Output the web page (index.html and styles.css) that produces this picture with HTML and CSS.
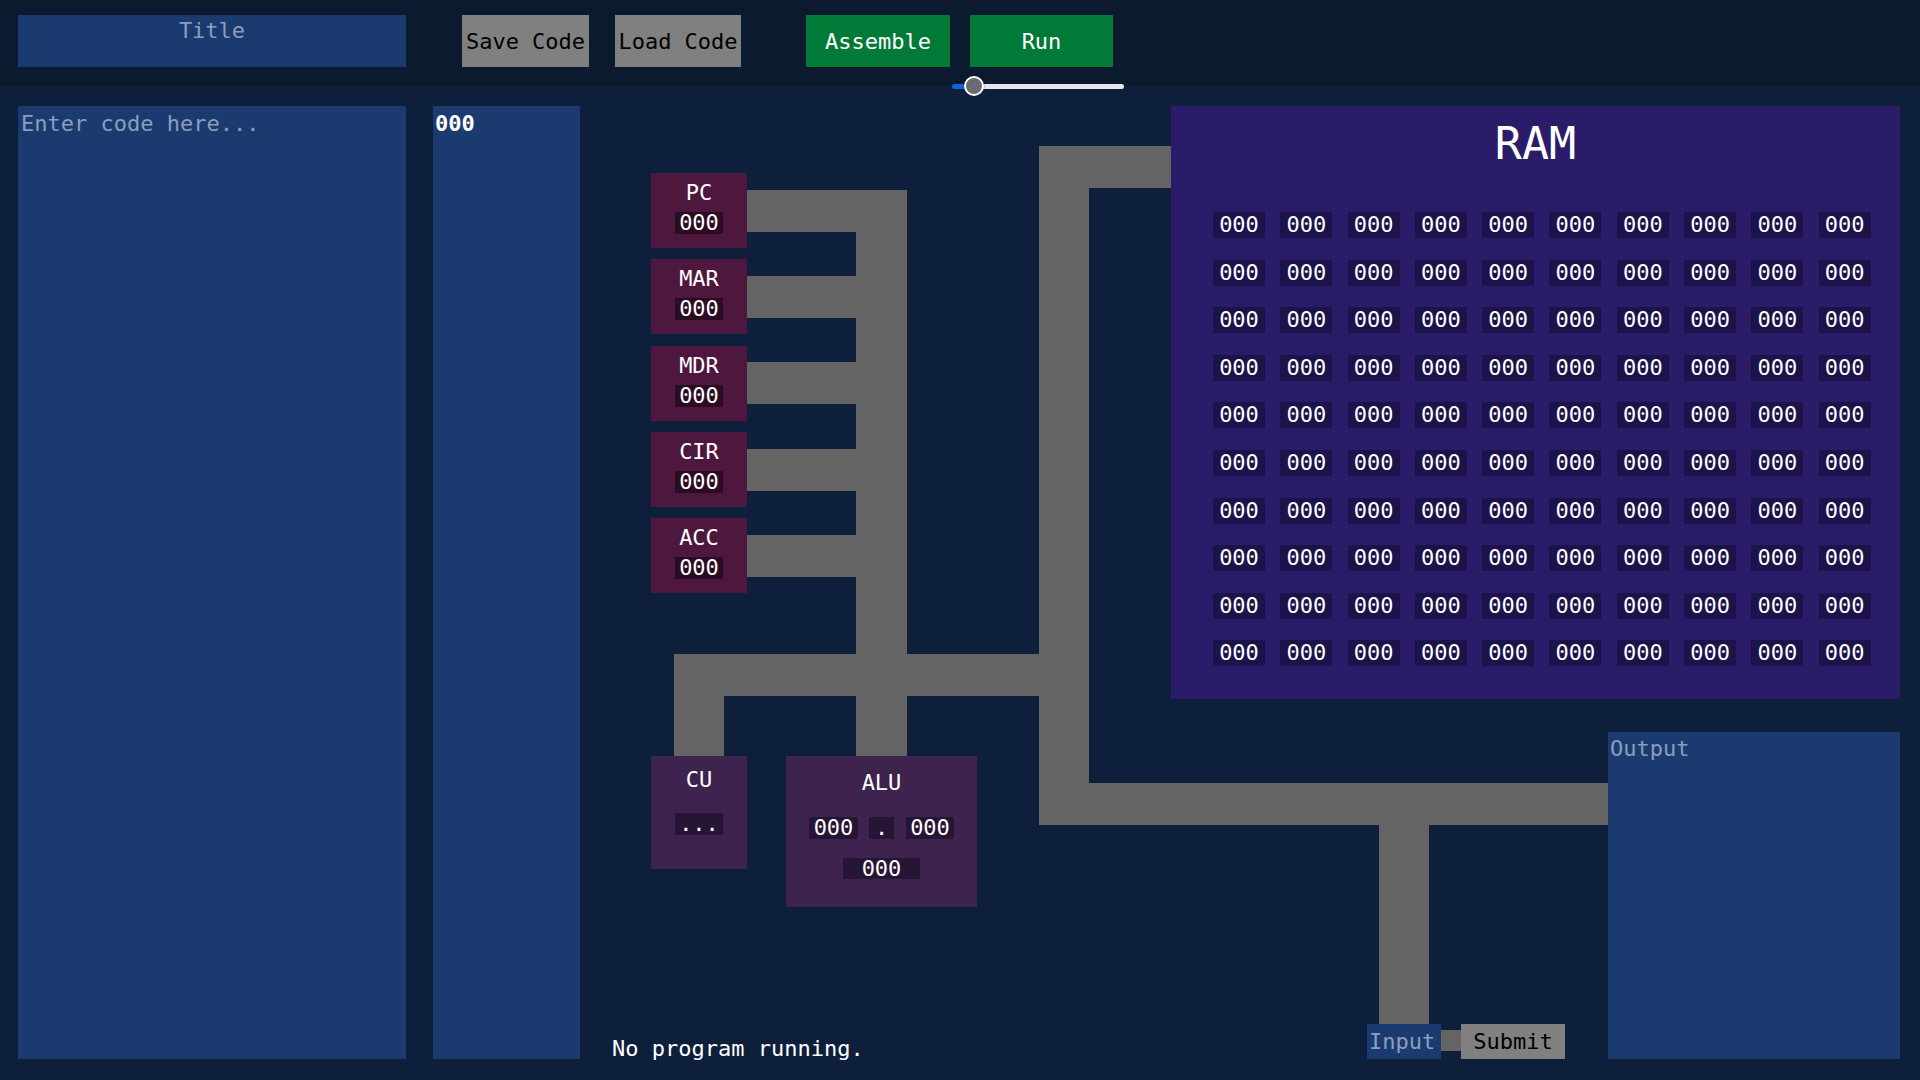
FILE: index.html
```html
<!DOCTYPE html>
<html lang="en">
<head>
<meta charset="utf-8">
<title>CPU Simulator</title>
<link rel="stylesheet" href="styles.css">
</head>
<body>
<header class="topbar">
  <textarea class="title-input" placeholder="Title"></textarea>
  <div class="file-buttons">
    <button class="btn btn-gray btn-save">Save Code</button>
    <button class="btn btn-gray btn-load">Load Code</button>
  </div>
  <div class="run-group">
    <div class="run-buttons">
      <button class="btn btn-green btn-assemble">Assemble</button>
      <button class="btn btn-green btn-run">Run</button>
    </div>
    <input type="range" class="speed" min="0" max="100" value="8">
  </div>
</header>

<main class="workspace">
  <textarea class="code-input" placeholder="Enter code here..."></textarea>
  <div class="memory-list"><div class="mem-line">000</div></div>

  <section class="cpu">
    <svg class="wires" width="1340" height="974" viewBox="0 0 1340 974">
      <rect x="167" y="84" width="160" height="42"/>
      <rect x="276" y="84" width="51" height="506"/>
      <rect x="167" y="170" width="109" height="42"/>
      <rect x="167" y="256" width="109" height="42"/>
      <rect x="167" y="343" width="109" height="42"/>
      <rect x="167" y="429" width="109" height="42"/>
      <rect x="94" y="548" width="415" height="42"/>
      <rect x="94" y="590" width="50" height="60"/>
      <rect x="276" y="590" width="51" height="60"/>
      <rect x="459" y="40" width="50" height="679"/>
      <rect x="459" y="40" width="132" height="42"/>
      <rect x="459" y="677" width="569" height="42"/>
      <rect x="799" y="719" width="50" height="199"/>
      <rect x="861" y="924" width="20" height="21"/>
    </svg>

    <div class="registers">
      <div class="register"><span class="reg-label">PC</span><span class="reg-value">000</span></div>
      <div class="register"><span class="reg-label">MAR</span><span class="reg-value">000</span></div>
      <div class="register"><span class="reg-label">MDR</span><span class="reg-value">000</span></div>
      <div class="register"><span class="reg-label">CIR</span><span class="reg-value">000</span></div>
      <div class="register"><span class="reg-label">ACC</span><span class="reg-value">000</span></div>
    </div>

    <div class="unit cu">
      <span class="unit-label">CU</span>
      <span class="unit-value cu-value">...</span>
    </div>

    <div class="unit alu">
      <span class="unit-label">ALU</span>
      <div class="alu-row">
        <span class="unit-value alu-a">000</span>
        <span class="unit-value alu-op">.</span>
        <span class="unit-value alu-b">000</span>
      </div>
      <span class="unit-value alu-result">000</span>
    </div>

    <div class="ram">
      <h2 class="ram-title">RAM</h2>
      <div class="ram-grid">
        <span class="ram-cell">000</span><span class="ram-cell">000</span><span class="ram-cell">000</span><span class="ram-cell">000</span><span class="ram-cell">000</span><span class="ram-cell">000</span><span class="ram-cell">000</span><span class="ram-cell">000</span><span class="ram-cell">000</span><span class="ram-cell">000</span>
        <span class="ram-cell">000</span><span class="ram-cell">000</span><span class="ram-cell">000</span><span class="ram-cell">000</span><span class="ram-cell">000</span><span class="ram-cell">000</span><span class="ram-cell">000</span><span class="ram-cell">000</span><span class="ram-cell">000</span><span class="ram-cell">000</span>
        <span class="ram-cell">000</span><span class="ram-cell">000</span><span class="ram-cell">000</span><span class="ram-cell">000</span><span class="ram-cell">000</span><span class="ram-cell">000</span><span class="ram-cell">000</span><span class="ram-cell">000</span><span class="ram-cell">000</span><span class="ram-cell">000</span>
        <span class="ram-cell">000</span><span class="ram-cell">000</span><span class="ram-cell">000</span><span class="ram-cell">000</span><span class="ram-cell">000</span><span class="ram-cell">000</span><span class="ram-cell">000</span><span class="ram-cell">000</span><span class="ram-cell">000</span><span class="ram-cell">000</span>
        <span class="ram-cell">000</span><span class="ram-cell">000</span><span class="ram-cell">000</span><span class="ram-cell">000</span><span class="ram-cell">000</span><span class="ram-cell">000</span><span class="ram-cell">000</span><span class="ram-cell">000</span><span class="ram-cell">000</span><span class="ram-cell">000</span>
        <span class="ram-cell">000</span><span class="ram-cell">000</span><span class="ram-cell">000</span><span class="ram-cell">000</span><span class="ram-cell">000</span><span class="ram-cell">000</span><span class="ram-cell">000</span><span class="ram-cell">000</span><span class="ram-cell">000</span><span class="ram-cell">000</span>
        <span class="ram-cell">000</span><span class="ram-cell">000</span><span class="ram-cell">000</span><span class="ram-cell">000</span><span class="ram-cell">000</span><span class="ram-cell">000</span><span class="ram-cell">000</span><span class="ram-cell">000</span><span class="ram-cell">000</span><span class="ram-cell">000</span>
        <span class="ram-cell">000</span><span class="ram-cell">000</span><span class="ram-cell">000</span><span class="ram-cell">000</span><span class="ram-cell">000</span><span class="ram-cell">000</span><span class="ram-cell">000</span><span class="ram-cell">000</span><span class="ram-cell">000</span><span class="ram-cell">000</span>
        <span class="ram-cell">000</span><span class="ram-cell">000</span><span class="ram-cell">000</span><span class="ram-cell">000</span><span class="ram-cell">000</span><span class="ram-cell">000</span><span class="ram-cell">000</span><span class="ram-cell">000</span><span class="ram-cell">000</span><span class="ram-cell">000</span>
        <span class="ram-cell">000</span><span class="ram-cell">000</span><span class="ram-cell">000</span><span class="ram-cell">000</span><span class="ram-cell">000</span><span class="ram-cell">000</span><span class="ram-cell">000</span><span class="ram-cell">000</span><span class="ram-cell">000</span><span class="ram-cell">000</span>
      </div>
    </div>

    <textarea class="output" placeholder="Output" readonly></textarea>
    <input class="input-box" type="text" placeholder="Input">
    <button class="btn btn-gray btn-submit">Submit</button>
    <p class="status">No program running.</p>
  </section>
</main>
</body>
</html>
```
FILE: styles.css
```css
* { box-sizing: border-box; }

html, body {
  margin: 0;
  height: 100%;
}

body {
  background: #0d1f3b;
  color: #ffffff;
  font-family: "DejaVu Sans Mono", "Liberation Mono", monospace;
  font-size: 22px;
  overflow: hidden;
}

textarea, input, button {
  font-family: inherit;
  font-size: 22px;
}

textarea::placeholder, input::placeholder {
  color: #8b9dbb;
  opacity: 1;
}

/* ---------- top bar ---------- */
.topbar {
  height: 86px;
  background: #0c1a30;
  display: flex;
  align-items: flex-start;
  padding: 15px 0 0 18px;
}

.title-input {
  width: 388px;
  height: 52px;
  border: none;
  outline: none;
  resize: none;
  background: #1b3b70;
  color: #ffffff;
  text-align: center;
  padding: 3px 2px;
  line-height: 26px;
}

.file-buttons {
  display: flex;
  gap: 26px;
  margin-left: 56px;
}

.btn {
  border: none;
  border-radius: 0;
  height: 52px;
  padding: 0;
  cursor: pointer;
}

.btn-gray {
  background: #808080;
  color: #000000;
}

.btn-save { width: 127px; }
.btn-load { width: 126px; }

.btn-green {
  background: #007a36;
  color: #ffffff;
}

.run-group {
  display: flex;
  flex-direction: column;
  margin-left: 65px;
}

.run-buttons {
  display: flex;
  gap: 20px;
}

.btn-assemble { width: 144px; }
.btn-run { width: 143px; }

.speed {
  -webkit-appearance: none;
  appearance: none;
  width: 172px;
  height: 20px;
  margin: 9px 0 0 146px;
  background: transparent;
  padding: 0;
}

.speed::-webkit-slider-runnable-track {
  height: 5px;
  border-radius: 3px;
  background: linear-gradient(to right, #1064e0 0, #1064e0 14px, #e6e6ea 14px);
}

.speed::-webkit-slider-thumb {
  -webkit-appearance: none;
  width: 20px;
  height: 20px;
  margin-top: -7.5px;
  border-radius: 50%;
  background: #6b6a77;
  border: 2px solid #ffffff;
  box-shadow: 0 0 2px rgba(0,0,0,0.5);
}

/* ---------- workspace ---------- */
.workspace {
  display: flex;
  align-items: flex-start;
  height: 994px;
  padding: 20px 0 0 18px;
}

.code-input {
  width: 388px;
  height: 953px;
  flex: none;
  border: none;
  outline: none;
  resize: none;
  background: #1b3b70;
  color: #ffffff;
  padding: 4px 3px;
  line-height: 28px;
}

.memory-list {
  width: 147px;
  height: 953px;
  flex: none;
  margin-left: 27px;
  background: #1b3b70;
  padding: 4px 2px;
}

.mem-line {
  font-weight: bold;
  line-height: 28px;
}

/* ---------- CPU diagram (free canvas) ---------- */
.cpu {
  position: relative;
  flex: none;
  width: 1340px;
  height: 974px;
}

.wires {
  position: absolute;
  left: 0;
  top: 0;
  fill: #646464;
}

.registers {
  position: absolute;
  left: 71px;
  top: 67px;
  display: flex;
  flex-direction: column;
  gap: 11.25px;
}

.register {
  width: 96px;
  height: 75px;
  background: #4e173d;
  display: flex;
  flex-direction: column;
  align-items: center;
  padding-top: 7px;
}

.reg-label {
  line-height: 26px;
}

.reg-value {
  margin-top: 6px;
  width: 48px;
  height: 22px;
  line-height: 22px;
  text-align: center;
  background: #2b0c22;
}

.unit {
  position: absolute;
  background: #3d234e;
  display: flex;
  flex-direction: column;
  align-items: center;
}

.unit-label {
  line-height: 26px;
}

.unit-value {
  display: block;
  height: 22px;
  line-height: 22px;
  text-align: center;
  background: #261535;
}

.cu {
  left: 71px;
  top: 650px;
  width: 96px;
  height: 113px;
  padding-top: 11px;
}

.cu-value {
  width: 48px;
  margin-top: 20px;
}

.alu {
  left: 206px;
  top: 650px;
  width: 191px;
  height: 151px;
  padding-top: 14px;
}

.alu-row {
  display: flex;
  gap: 11px;
  margin-top: 21px;
}

.alu-a { width: 49px; }
.alu-op { width: 25px; }
.alu-b { width: 48px; margin-left: 1px; }

.alu-result {
  width: 77px;
  height: 21px;
  line-height: 21px;
  margin-top: 19px;
}

.ram {
  position: absolute;
  left: 591px;
  top: 0;
  width: 729px;
  height: 593px;
  background: #2a1c68;
  padding: 12px 29px 0 42px;
}

.ram-title {
  margin: 0 -29px 0 -42px;
  font-size: 45px;
  font-weight: normal;
  line-height: 52px;
  text-align: center;
}

.ram-grid {
  margin-top: 42px;
  display: grid;
  grid-template-columns: repeat(10, 52px);
  column-gap: 15.3px;
  row-gap: 21.6px;
}

.ram-cell {
  height: 26px;
  line-height: 26px;
  text-align: center;
  background: #1c134a;
}

.output {
  position: absolute;
  left: 1028px;
  top: 626px;
  width: 292px;
  height: 327px;
  border: none;
  outline: none;
  resize: none;
  background: #1b3b70;
  color: #ffffff;
  padding: 4px 2px;
  line-height: 26px;
}

.input-box {
  position: absolute;
  left: 787px;
  top: 918px;
  width: 74px;
  height: 35px;
  border: none;
  outline: none;
  background: #1b3b70;
  color: #ffffff;
  padding: 0 2px;
}

.btn-submit {
  position: absolute;
  left: 881px;
  top: 918px;
  width: 104px;
  height: 35px;
}

.status {
  position: absolute;
  left: 32px;
  top: 930px;
  margin: 0;
  line-height: 26px;
  color: #ffffff;
}
```
